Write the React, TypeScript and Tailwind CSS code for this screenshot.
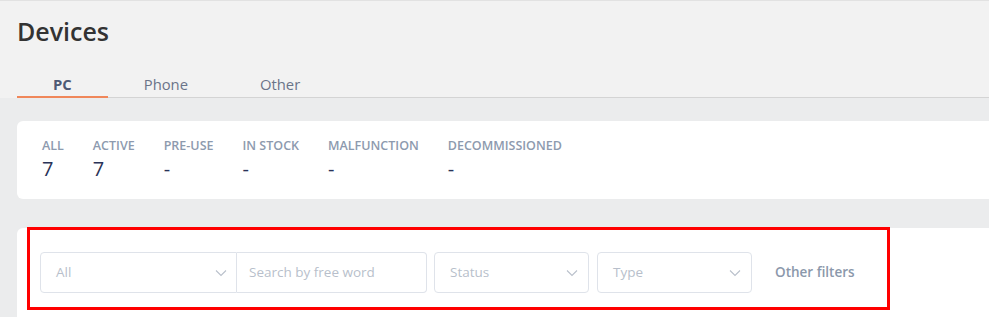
import React from 'react';

const stats = [
    { label: 'ALL', value: '7' },
    { label: 'ACTIVE', value: '7' },
    { label: 'PRE-USE', value: '-' },
    { label: 'IN STOCK', value: '-' },
    { label: 'MALFUNCTION', value: '-' },
    { label: 'DECOMMISSIONED', value: '-' },
];

const tabs = ['PC', 'Phone', 'Other'];

function Chevron() {
    return (
        <svg width="12" height="8" viewBox="0 0 12 8" fill="none" className="shrink-0">
            <path d="M1 1.5L6 6.5L11 1.5" stroke="#b9c0cb" strokeWidth="1.1" />
        </svg>
    );
}

export default function App() {
    return (
        <div className="w-[989px] h-[317px] overflow-hidden bg-[#ebeced] font-['Open_Sans',sans-serif]">
            {/* Header */}
            <div className="bg-[#f2f2f2] border-t border-[#e2e2e2] pl-[17px]">
                <h1 className="pt-[12px] text-[25px] leading-[36px] font-semibold text-[#333333]">Devices</h1>
                <div className="mt-[23px] flex border-b border-[#d4d4d4]">
                    {tabs.map((t, i) => (
                        <div
                            key={t}
                            className={
                                i === 0
                                    ? 'px-9 text-[14.8px] leading-[24px] font-bold text-[#4e5a75] border-b-2 border-[#f0875a] -mb-px'
                                    : 'px-9 text-[14.8px] leading-[24px] text-[#6b7489]'
                            }
                        >
                            {t}
                        </div>
                    ))}
                </div>
            </div>

            {/* Stats card */}
            <div className="mt-[23px] ml-[17px] bg-white rounded-l-[6px] h-[78px] pl-[25px] pt-[16px] flex gap-[29px]">
                {stats.map((s) => (
                    <div key={s.label} className="flex flex-col">
                        <span className="text-[12.5px] leading-[18px] font-semibold text-[#8d9aae]">{s.label}</span>
                        <span className="text-[20px] leading-[28px] text-[#2a3358]">{s.value}</span>
                    </div>
                ))}
            </div>

            {/* Filters card */}
            <div className="relative mt-[29px] ml-[17px] bg-white rounded-tl-[6px] h-[100px] pl-[23px] pt-[24px]">
                <div className="flex items-center">
                    <div className="w-[197px] h-[41px] border border-[#dfe3ea] rounded-l-[4px] flex items-center justify-between pl-[15px] pr-[9px]">
                        <span className="text-[13.5px] text-[#b8bfcb]">All</span>
                        <Chevron />
                    </div>
                    <div className="w-[190px] h-[41px] border border-l-0 border-[#dfe3ea] rounded-r-[4px] flex items-center pl-[12px]">
                        <span className="text-[13.5px] text-[#b8bfcb]">Search by free word</span>
                    </div>
                    <div className="ml-[7px] w-[155px] h-[41px] border border-[#dfe3ea] rounded-[4px] flex items-center justify-between pl-[15px] pr-[10px]">
                        <span className="text-[13.5px] text-[#b8bfcb]">Status</span>
                        <Chevron />
                    </div>
                    <div className="ml-[8px] w-[155px] h-[41px] border border-[#dfe3ea] rounded-[4px] flex items-center justify-between pl-[15px] pr-[10px]">
                        <span className="text-[13.5px] text-[#b8bfcb]">Type</span>
                        <Chevron />
                    </div>
                    <span className="ml-[23px] text-[13.5px] font-semibold text-[#8b98ab]">Other filters</span>
                </div>

                {/* Red annotation box */}
                <div className="absolute left-[10px] top-[-1px] w-[863px] h-[83px] border-[3px] border-[#ff0000] pointer-events-none" />
            </div>
        </div>
    );
}
